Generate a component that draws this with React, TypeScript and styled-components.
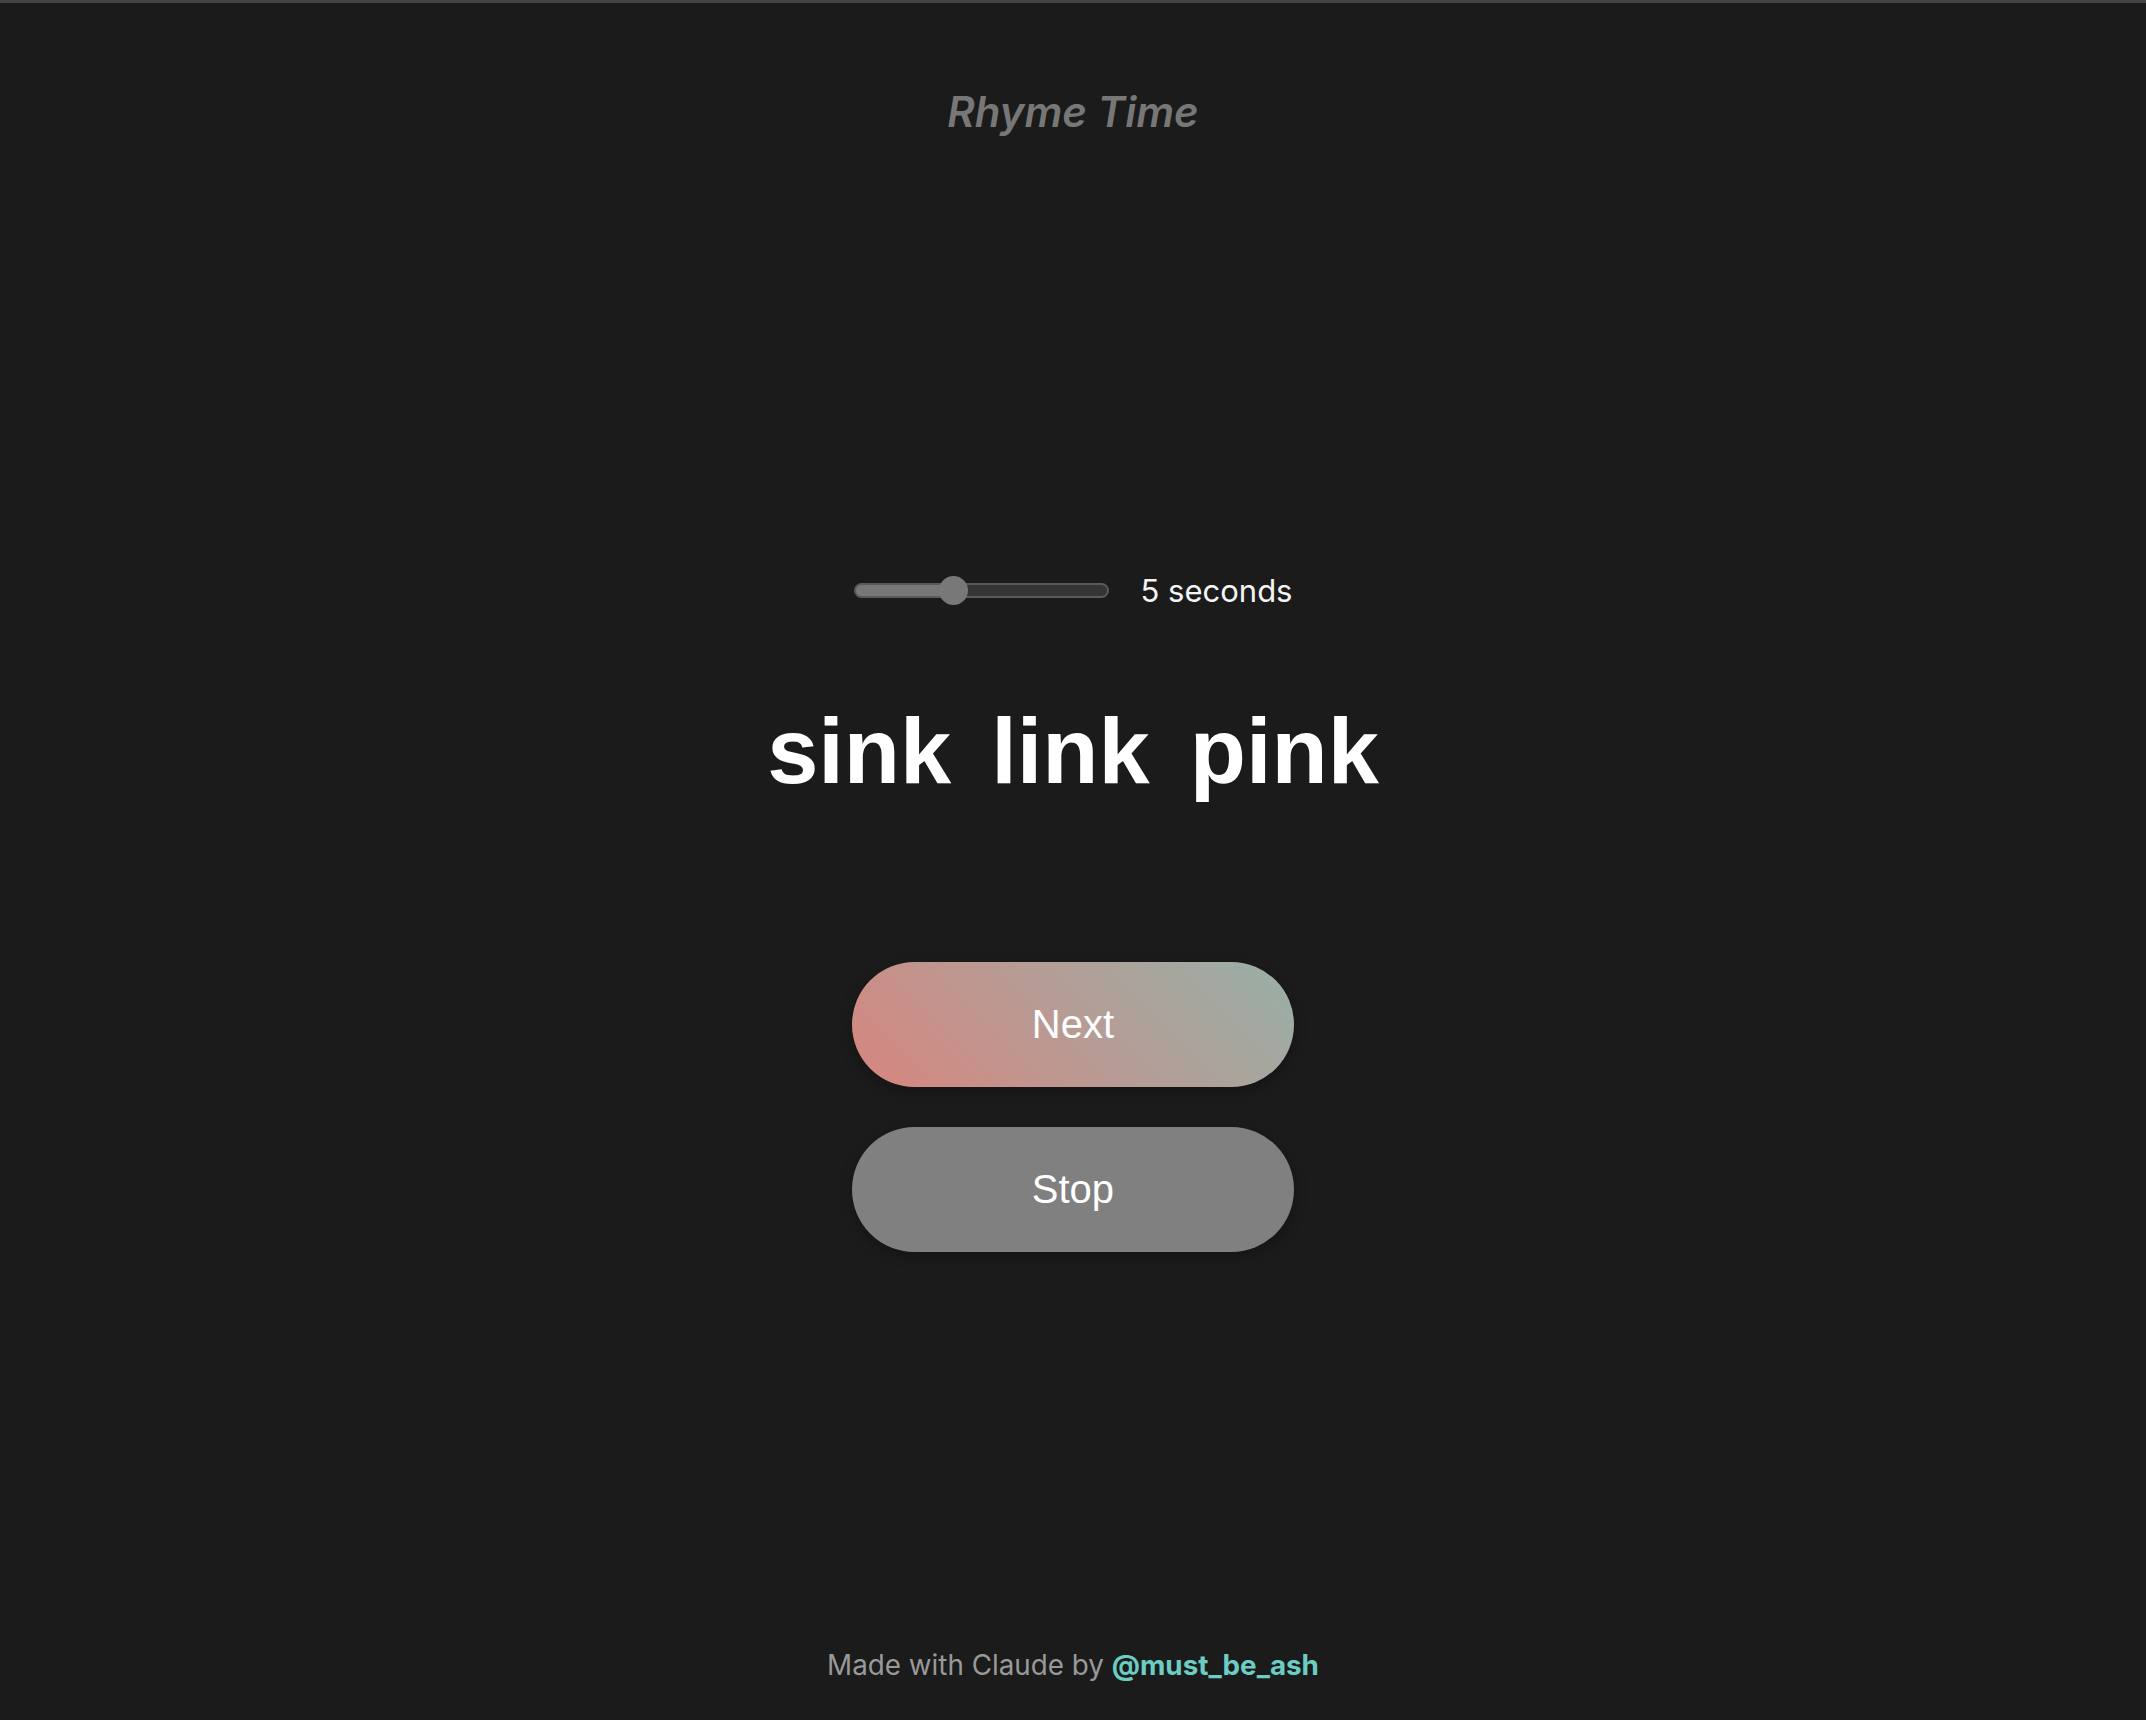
import { useState } from "react";
import styled, { createGlobalStyle } from "styled-components";

const MIN = 2;
const MAX = 10;
const THUMB = 29;
const TRACK = 251; // inner width of the track

const GlobalStyle = createGlobalStyle`
  html, body {
    margin: 0;
    padding: 0;
    background: #1b1b1b;
  }
  * {
    box-sizing: border-box;
  }
`;

export default function App() {
  const [seconds, setSeconds] = useState(5);
  const words = ["sink", "link", "pink"];

  const frac = (seconds - MIN) / (MAX - MIN);
  const fill = ((THUMB / 2 + frac * (TRACK - THUMB)) / TRACK) * 100;

  return (
    <Page>
      <GlobalStyle />
      <Title>Rhyme Time</Title>
      <Main>
        <SliderRow>
          <Range
            min={MIN}
            max={MAX}
            value={seconds}
            onChange={(e) => setSeconds(Number(e.target.value))}
            style={{ ["--fill" as string]: `${fill}%` }}
          />
          <SliderLabel>{seconds} seconds</SliderLabel>
        </SliderRow>
        <Words>
          {words.map((w) => (
            <Word key={w}>{w}</Word>
          ))}
        </Words>
        <Buttons>
          <PillButton $variant="next">Next</PillButton>
          <PillButton $variant="stop">Stop</PillButton>
        </Buttons>
      </Main>
      <Footer>
        Made with Claude by <Handle>@must_be_ash</Handle>
      </Footer>
    </Page>
  );
}

const Page = styled.div`
  display: flex;
  flex-direction: column;
  align-items: center;
  min-height: 100vh;
  border-top: 3px solid #454545;
  background: #1b1b1b;
`;

const Title = styled.h1`
  margin: 83px 0 0;
  font-family: Inter, "Noto Sans", sans-serif;
  font-style: italic;
  font-weight: 600;
  font-size: 42px;
  line-height: 52px;
  color: #777;
`;

const Main = styled.main`
  display: flex;
  flex-direction: column;
  align-items: center;
  margin-top: 433px;
`;

const SliderRow = styled.div`
  display: flex;
  align-items: center;
  gap: 32px;
  height: 39px;
`;

const Range = styled.input.attrs({ type: "range" })`
  -webkit-appearance: none;
  appearance: none;
  width: 255px;
  height: 15px;
  margin: 0;
  border: 2px solid #5a5a5a;
  border-radius: 8px;
  background: linear-gradient(
    to right,
    #777 0%,
    #777 var(--fill),
    #353535 var(--fill)
  );
  outline: none;
  cursor: pointer;

  &::-webkit-slider-thumb {
    -webkit-appearance: none;
    appearance: none;
    width: 29px;
    height: 29px;
    border-radius: 50%;
    border: none;
    background: #787878;
  }
`;

const SliderLabel = styled.span`
  font-family: Inter, "Noto Sans", sans-serif;
  font-size: 31px;
  color: #f4f4f4;
  line-height: 39px;
`;

const Words = styled.div`
  display: flex;
  gap: 40px;
  margin-top: 88px;
`;

const Word = styled.span`
  font-family: "Liberation Sans", Arial, sans-serif;
  font-weight: 700;
  font-size: 92px;
  line-height: 107px;
  color: #fff;
`;

const Buttons = styled.div`
  display: flex;
  flex-direction: column;
  gap: 40px;
  margin-top: 157px;
`;

const PillButton = styled.button<{ $variant: "next" | "stop" }>`
  width: 442px;
  height: 125px;
  border: none;
  border-radius: 63px;
  font-family: "Liberation Sans", Arial, sans-serif;
  font-size: 40px;
  color: #fff;
  cursor: pointer;
  box-shadow: 0 4px 14px rgba(0, 0, 0, 0.25);
  background: ${({ $variant }) =>
    $variant === "next"
      ? "linear-gradient(45deg, #d8857e 0%, #b69c95 50%, #98b0a7 100%)"
      : "#808080"};
`;

const Footer = styled.footer`
  margin-top: auto;
  padding-bottom: 38px;
  font-family: Inter, "Noto Sans", sans-serif;
  font-size: 27.8px;
  line-height: 34px;
  color: #999;
`;

const Handle = styled.a`
  color: #6ccdc3;
  font-weight: 700;
  text-decoration: none;
`;
